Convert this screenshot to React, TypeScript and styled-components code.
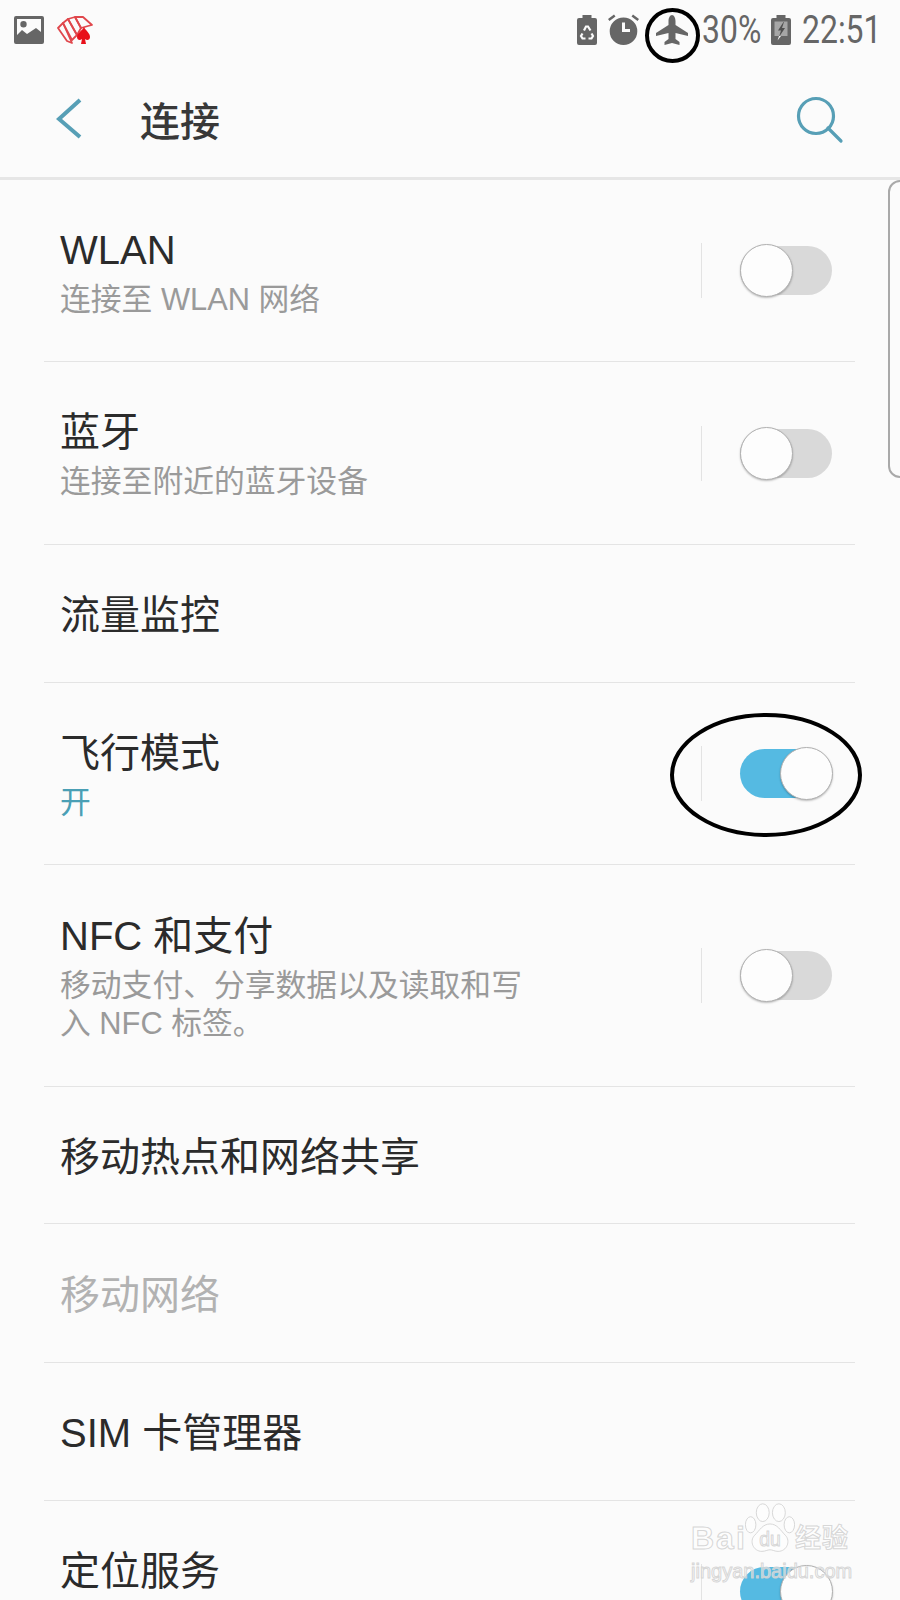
import styled, { createGlobalStyle } from "styled-components";

const GlobalStyle = createGlobalStyle`
  html, body {
    margin: 0;
    padding: 0;
    background-color: #fbfbfb;
  }
`;

const colors = {
  accent: "#579fb6",
  title: "#2b2b2b",
  sub: "#9a9a9a",
  disabled: "#b2b2b2",
  statusIcon: "#666666",
  line: "#e6e6e6",
};

const font = `"Liberation Sans", "Noto Sans CJK SC", sans-serif`;

const StyledPage = styled.div`
  position: relative;
  width: 900px;
  height: 1600px;
  overflow: hidden;
  background-color: #fbfbfb;
  font-family: ${font};
`;

const StyledStatusBar = styled.div`
  display: flex;
  align-items: center;
  height: 60px;
  padding: 0 22px 0 14px;
  color: ${colors.statusIcon};
`;

const StyledStatusLeft = styled.div`
  display: flex;
  align-items: center;
  gap: 13px;
  flex: 1;
`;

const StyledStatusRight = styled.div`
  display: flex;
  align-items: center;
`;

const StyledStatusText = styled.span<{ $width: number; $gap: number }>`
  display: inline-block;
  width: ${(p) => p.$width}px;
  margin-right: ${(p) => p.$gap}px;
  font-family: Roboto, sans-serif;
  font-size: 38px;
  line-height: 60px;
  white-space: nowrap;
  transform: scaleX(0.84);
  transform-origin: left center;
`;

const StyledStatusIcon = styled.svg<{ $gap: number }>`
  display: block;
  margin-right: ${(p) => p.$gap}px;
  fill: ${colors.statusIcon};
`;

const StyledHeader = styled.header`
  display: flex;
  align-items: center;
  height: 117px;
  padding: 0 56px 0 56px;
  border-bottom: 3px solid ${colors.line};
`;

const StyledBackIcon = styled.svg`
  display: block;
  margin-right: 58px;
`;

const StyledHeaderTitle = styled.h1`
  flex: 1;
  margin: 0;
  font-size: 40px;
  font-weight: 500;
  color: #383838;
`;

const StyledList = styled.div`
  display: flex;
  flex-direction: column;
  margin: 0 45px 0 44px;
`;

const StyledRow = styled.div<{ $height: number }>`
  display: flex;
  align-items: center;
  flex: none;
  box-sizing: border-box;
  height: ${(p) => p.$height}px;
  padding-left: 16px;
  border-bottom: 1px solid #e4e4e4;
`;

const StyledRowText = styled.div`
  flex: 1;
  padding-top: 3px;
`;

const StyledTitle = styled.div<{ $disabled?: boolean }>`
  font-size: 40px;
  line-height: 50px;
  color: ${(p) => (p.$disabled ? colors.disabled : colors.title)};
`;

const StyledSub = styled.div<{ $on?: boolean }>`
  width: 475px;
  margin-top: 6px;
  font-size: 30.8px;
  line-height: 38.5px;
  color: ${(p) => (p.$on ? "#4a9fb5" : colors.sub)};
`;

const StyledSwitchArea = styled.div`
  display: flex;
  align-items: center;
  gap: 38px;
  margin-right: 23px;
`;

const StyledSwitchDivider = styled.div`
  width: 1px;
  height: 55px;
  background-color: #e3e3e3;
`;

const StyledSwitch = styled.div<{ $on?: boolean }>`
  position: relative;
  width: 92px;
  height: 49px;
  border-radius: 25px;
  background-color: ${(p) => (p.$on ? "#55bae2" : "#d9d9d9")};
`;

const StyledKnob = styled.div<{ $on?: boolean }>`
  position: absolute;
  top: -2px;
  left: ${(p) => (p.$on ? "40px" : "0")};
  box-sizing: border-box;
  width: 53px;
  height: 53px;
  border-radius: 50%;
  background-color: #fdfdfd;
  border: 1px solid #b0b0b0;
  box-shadow: 0 1px 2px rgba(0, 0, 0, 0.25);
`;

const StyledScrollHint = styled.div`
  position: absolute;
  top: 180px;
  left: 888px;
  box-sizing: border-box;
  width: 30px;
  height: 298px;
  border: 2px solid #a9a9a9;
  border-radius: 12px;
  background-color: #fbfbfb;
`;

const StyledMarks = styled.svg`
  position: absolute;
  top: 0;
  left: 0;
  pointer-events: none;
`;

const StyledWatermark = styled.div`
  position: absolute;
  top: 1503px;
  left: 691px;
  width: 170px;
  color: rgba(255, 255, 255, 0.5);
  -webkit-text-stroke: 1px rgba(210, 210, 210, 0.9);
  font-family: ${font};
`;

const StyledWatermarkLogo = styled.div`
  display: flex;
  align-items: flex-end;
  height: 50px;
`;

const StyledWatermarkWord = styled.span<{ $size: number; $width: number; $spacing: number }>`
  display: inline-block;
  width: ${(p) => p.$width}px;
  margin-bottom: 3px;
  font-size: ${(p) => p.$size}px;
  letter-spacing: ${(p) => p.$spacing}px;
  line-height: 24px;
  font-weight: 700;
  white-space: nowrap;
`;

const StyledWatermarkUrl = styled.div`
  margin-top: 6px;
  font-size: 20px;
  line-height: 24px;
  white-space: nowrap;
`;

const GalleryIcon = () => (
  <StyledStatusIcon $gap={0} width="30" height="28" viewBox="0 0 30 28">
    <path
      fillRule="evenodd"
      d="M2 0h26a2 2 0 0 1 2 2v24a2 2 0 0 1-2 2H2a2 2 0 0 1-2-2V2a2 2 0 0 1 2-2zM3 3v16l5-5 5 4 9-6 5 4V3zM9.500 5a3.200 3.200 0 1 1 0 6.400 3.200 3.200 0 0 1 0-6.400z"
    />
  </StyledStatusIcon>
);

const CardsIcon = () => (
  <svg width="37" height="28" viewBox="0 0 37 28" fill="none" stroke="#e0474c" strokeWidth="1.800" strokeLinejoin="round">
    <path d="M1 12l5-5 9 20-5-2z" />
    <path d="M6 7l5-4 9 16-5 5z" />
    <path d="M11 3l7-2 6 11-4 7z" />
    <path d="M18 1l8 0 9 8-4 1-7 2z" />
    <path
      d="M27 11c2 4 6 6 6 10 0 3-3 4-5 2l1 5h-5l1-5c-2 2-5 1-5-2 0-4 5-6 7-10z"
      fill="#e8101a"
      stroke="none"
    />
  </svg>
);

const RecycleBatteryIcon = () => (
  <StyledStatusIcon $gap={11} width="20" height="30" viewBox="0 0 20 30">
    <path d="M5.500 0h9v3H18a2 2 0 0 1 2 2v23a2 2 0 0 1-2 2H2a2 2 0 0 1-2-2V5a2 2 0 0 1 2-2h3.500z" />
    <path
      d="M7 15.500l2-4h2l2.500 4M5.500 18.500l-1.500 2.500 1.500 2.500h3M14.500 18.500l1.500 2.500-1.500 2.500h-3"
      fill="none"
      stroke="#fbfbfb"
      strokeWidth="2.200"
    />
  </StyledStatusIcon>
);

const AlarmIcon = () => (
  <StyledStatusIcon $gap={17} width="31" height="32" viewBox="0 0 31 32">
    <path
      fillRule="evenodd"
      d="M15.500 3.500a13.800 13.800 0 1 1 0 27.600 13.800 13.800 0 0 1 0-27.600zM14 8.500v9.500h8v-3h-5V8.500z"
    />
    <path d="M0 5 6 0.500 7.500 2.500 1.500 7zM31 5 25 0.500 23.500 2.500 29.500 7z" />
  </StyledStatusIcon>
);

const PlaneIcon = () => (
  <StyledStatusIcon $gap={14} width="32" height="30" viewBox="0 0 32 30">
    <path d="M16 0c2 0 3.500 3 3.500 6v4L32 18v3l-12.500-3v6l4 3v3L16 28l-7.500 2v-3l4-3v-6L0 21v-3l12.500-8V6C12.500 3 14 0 16 0z" />
  </StyledStatusIcon>
);

const ChargingBatteryIcon = () => (
  <StyledStatusIcon $gap={11} width="20" height="30" viewBox="0 0 20 30">
    <path d="M5.500 0h9v3H18a2 2 0 0 1 2 2v23a2 2 0 0 1-2 2H2a2 2 0 0 1-2-2V5a2 2 0 0 1 2-2h3.500z" />
    <path d="M3.500 6.500h13V21h-13z" fill="#a6a6a6" />
    <path d="M12.500 7L7 15.500h3L8 22l6-9h-3l2-6z" fill="#505050" />
    <path d="M8 21l-1.500 4.500 3.500-4.500z" fill="#f2f2f2" />
  </StyledStatusIcon>
);

const BackIcon = () => (
  <StyledBackIcon width="26" height="42" viewBox="0 0 26 42" fill="none" stroke={colors.accent} strokeWidth="4">
    <path d="M24 2 3 21l21 18" />
  </StyledBackIcon>
);

const SearchIcon = () => (
  <svg width="48" height="50" viewBox="0 0 48 50" fill="none" stroke={colors.accent} strokeWidth="3.200" strokeLinecap="round">
    <circle cx="20" cy="22" r="17.500" />
    <path d="M32 34l13 13" />
  </svg>
);

const PawIcon = () => (
  <svg width="50" height="50" viewBox="0 0 62 62" fill="rgba(255,255,255,0.5)" stroke="rgba(210,210,210,0.9)" strokeWidth="1.200">
    <ellipse cx="22" cy="12" rx="8" ry="11" />
    <ellipse cx="42" cy="12" rx="8" ry="11" />
    <ellipse cx="7" cy="27" rx="6.500" ry="10" />
    <ellipse cx="55" cy="27" rx="6.500" ry="10" />
    <path d="M31 26c9 0 13 8 19 14 7 7 2 20-9 20-4 0-7-2-10-2s-6 2-10 2c-11 0-16-13-9-20 6-6 10-14 19-14z" />
    <text x="31" y="53" textAnchor="middle" fontSize="24" fontFamily="Liberation Sans, sans-serif">
      du
    </text>
  </svg>
);

interface SwitchProps {
  on?: boolean;
}

const Switch = ({ on }: SwitchProps): JSX.Element => (
  <StyledSwitchArea>
    <StyledSwitchDivider />
    <StyledSwitch $on={on}>
      <StyledKnob $on={on} />
    </StyledSwitch>
  </StyledSwitchArea>
);

interface SettingRow {
  title: string;
  sub?: string[];
  height: number;
  toggle?: "on" | "off";
  subOn?: boolean;
  disabled?: boolean;
}

const rows: SettingRow[] = [
  { title: "WLAN", sub: ["连接至 WLAN 网络"], height: 182, toggle: "off" },
  { title: "蓝牙", sub: ["连接至附近的蓝牙设备"], height: 183, toggle: "off" },
  { title: "流量监控", height: 138 },
  { title: "飞行模式", sub: ["开"], subOn: true, height: 182, toggle: "on" },
  {
    title: "NFC 和支付",
    sub: ["移动支付、分享数据以及读取和写", "入 NFC 标签。"],
    height: 222,
    toggle: "off",
  },
  { title: "移动热点和网络共享", height: 137 },
  { title: "移动网络", height: 139, disabled: true },
  { title: "SIM 卡管理器", height: 138 },
  // the second line of this row falls below the fold
  { title: "定位服务", sub: ["\u00a0"], height: 182, toggle: "on" },
];

const App = (): JSX.Element => {
  return (
    <StyledPage>
      <GlobalStyle />
      <StyledStatusBar>
        <StyledStatusLeft>
          <GalleryIcon />
          <CardsIcon />
        </StyledStatusLeft>
        <StyledStatusRight>
          <RecycleBatteryIcon />
          <AlarmIcon />
          <PlaneIcon />
          <StyledStatusText $width={58} $gap={11}>
            30%
          </StyledStatusText>
          <ChargingBatteryIcon />
          <StyledStatusText $width={76} $gap={0}>
            22:51
          </StyledStatusText>
        </StyledStatusRight>
      </StyledStatusBar>

      <StyledHeader>
        <BackIcon />
        <StyledHeaderTitle>连接</StyledHeaderTitle>
        <SearchIcon />
      </StyledHeader>

      <StyledList>
        {rows.map((row) => (
          <StyledRow key={row.title} $height={row.height}>
            <StyledRowText>
              <StyledTitle $disabled={row.disabled}>{row.title}</StyledTitle>
              {row.sub && (
                <StyledSub $on={row.subOn}>
                  {row.sub.map((line) => (
                    <div key={line}>{line}</div>
                  ))}
                </StyledSub>
              )}
            </StyledRowText>
            {row.toggle && <Switch on={row.toggle === "on"} />}
          </StyledRow>
        ))}
      </StyledList>

      <StyledScrollHint />

      <StyledMarks width="900" height="1600" viewBox="0 0 900 1600" fill="none" stroke="#000" strokeWidth="4">
        <ellipse cx="672.500" cy="35.500" rx="25.500" ry="25.500" />
        <ellipse cx="766" cy="775" rx="94" ry="60" />
      </StyledMarks>

      <StyledWatermark>
        <StyledWatermarkLogo>
          <StyledWatermarkWord $size={32} $width={54} $spacing={2}>
            Bai
          </StyledWatermarkWord>
          <PawIcon />
          <StyledWatermarkWord $size={26} $width={56} $spacing={1}>
            经验
          </StyledWatermarkWord>
        </StyledWatermarkLogo>
        <StyledWatermarkUrl>jingyan.baidu.com</StyledWatermarkUrl>
      </StyledWatermark>
    </StyledPage>
  );
};

export default App;
